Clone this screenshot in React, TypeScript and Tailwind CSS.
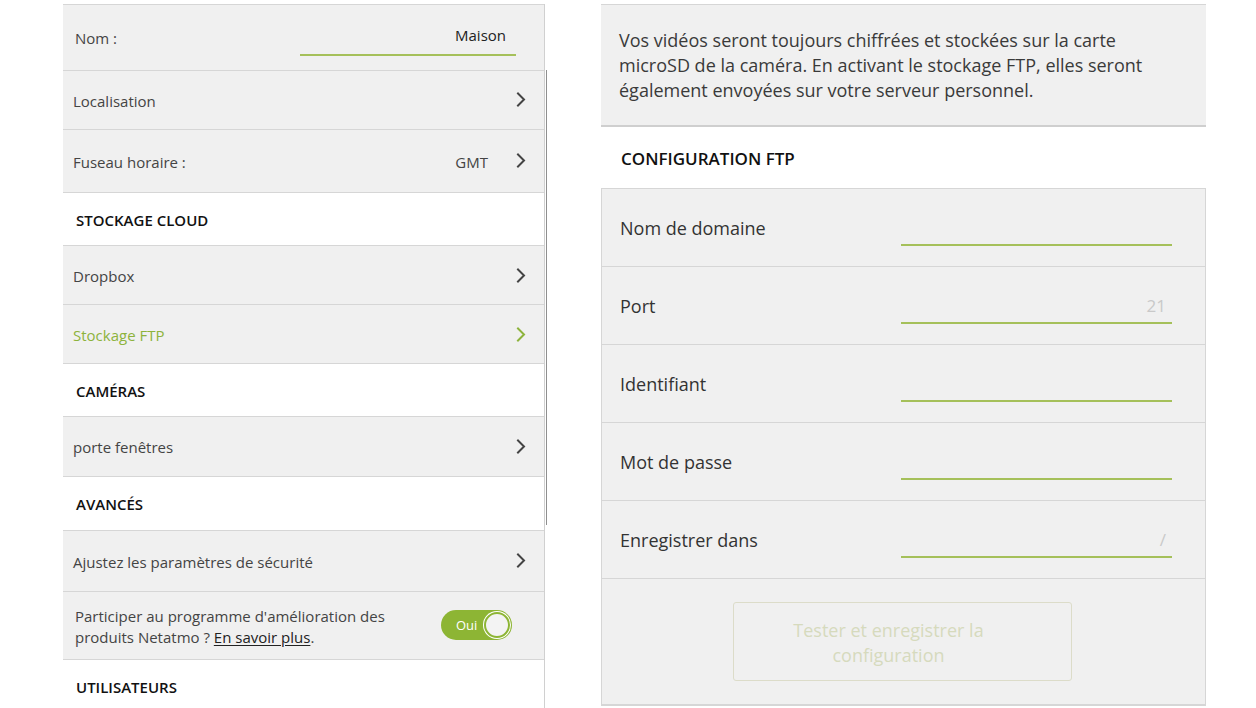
import React from "react";

const Chevron = ({ color = "#444" }: { color?: string }) => (
  <svg width="10" height="15" viewBox="0 0 10 15" fill="none">
    <path d="M2 1.5 L8 7.5 L2 13.5" stroke={color} strokeWidth="2" strokeLinecap="square" strokeLinejoin="miter" />
  </svg>
);

const Row = ({
  label,
  h,
  green,
  right,
}: {
  label: string;
  h: string;
  green?: boolean;
  right?: string;
}) => (
  <div className={`flex items-center justify-between border-b border-[#d6d6d6] bg-[#f0f0f0] pl-[10px] pr-[18px] ${h}`}>
    <span className={`pt-[2px] text-[15px] ${green ? "text-[#8db33c]" : "text-[#444]"}`}>{label}</span>
    <div className="flex items-center gap-[28px]">
      {right && <span className="pt-[2px] text-[15px] text-[#444]">{right}</span>}
      <Chevron color={green ? "#8db33c" : "#444"} />
    </div>
  </div>
);

const Header = ({ label, h }: { label: string; h: string }) => (
  <div className={`flex items-center border-b border-[#d6d6d6] bg-white pl-[13px] ${h}`}>
    <span className="pt-[2px] text-[15px] font-semibold text-[#111]">{label}</span>
  </div>
);

const Field = ({ label, placeholder }: { label: string; placeholder?: string }) => (
  <div className="flex h-[78px] justify-between border-b border-[#d6d6d6] bg-[#f0f0f0] pl-[18px] pr-[33px]">
    <span className="self-center pt-[2px] text-[18px] text-[#333]">{label}</span>
    <div className="mb-[20px] flex h-[34px] w-[271px] items-center justify-end self-end border-b-2 border-[#a5c05a] pr-[6px]">
      {placeholder && <span className="text-[17px] text-[#c9c9c9]">{placeholder}</span>}
    </div>
  </div>
);

export default function App() {
  return (
    <div
      className="flex h-[708px] w-[1256px] overflow-hidden bg-white"
      style={{ fontFamily: '"Open Sans", "Liberation Sans", sans-serif' }}
    >
      {/* Left panel */}
      <div className="ml-[63px] mt-[4px] flex w-[482px] flex-col border-r border-[#d0d0d0]">
        <div className="flex h-[67px] items-center justify-between border-y border-[#d6d6d6] bg-[#f0f0f0] pl-[12px] pr-[28px]">
          <span className="pt-[2px] text-[15px] text-[#444]">Nom :</span>
          <div className="flex h-[38px] w-[216px] items-center justify-end border-b-2 border-[#a5c05a] pr-[10px] pb-[2px]">
            <span className="text-[15px] text-[#222]">Maison</span>
          </div>
        </div>
        <Row label="Localisation" h="h-[60px]" />
        <Row label="Fuseau horaire :" h="h-[63px]" right="GMT" />
        <Header label="STOCKAGE CLOUD" h="h-[54px]" />
        <Row label="Dropbox" h="h-[59px]" />
        <Row label="Stockage FTP" h="h-[60px]" green />
        <Header label="CAMÉRAS" h="h-[53px]" />
        <Row label="porte fenêtres" h="h-[60px]" />
        <Header label="AVANCÉS" h="h-[55px]" />
        <Row label="Ajustez les paramètres de sécurité" h="h-[61px]" />
        <div className="flex h-[69px] items-center justify-between border-b border-[#d6d6d6] bg-[#f0f0f0] pl-[12px] pr-[32px]">
          <p className="pt-[3px] text-[15px] leading-[21px] text-[#444]">
            Participer au programme d'amélioration des
            <br />
            produits Netatmo ? <span className="text-[#222] underline underline-offset-2">En savoir plus</span>.
          </p>
          <div className="flex h-[30px] w-[71px] items-center justify-between rounded-full bg-[#8db534] pl-[15px] pr-[2px]">
            <span className="text-[13px] text-white">Oui</span>
            <div className="h-[26px] w-[26px] rounded-full border-2 border-[#8db534] bg-[#f3f3f3] ring-1 ring-white" />
          </div>
        </div>
        <div className="flex h-[48px] items-start bg-white pl-[13px] pt-[16px]">
          <span className="text-[15px] font-semibold text-[#111]">UTILISATEURS</span>
        </div>
      </div>
      <div className="ml-px mt-[70px] h-[455px] w-px bg-[#8f8f8f]" />

      {/* Right panel */}
      <div className="ml-[54px] mt-[4px] flex w-[605px] flex-col">
        <div className="h-[123px] border-y border-[#d6d6d6] border-b-2 border-b-[#cfcfcf] bg-[#f0f0f0] pl-[18px] pt-[23px]">
          <p className="text-[18px] leading-[25px] text-[#3a3a3a]">
            Vos vidéos seront toujours chiffrées et stockées sur la carte
            <br />
            microSD de la caméra. En activant le stockage FTP, elles seront
            <br />
            également envoyées sur votre serveur personnel.
          </p>
        </div>
        <div className="flex h-[62px] items-center border-b border-[#d6d6d6] bg-white pl-[20px]">
          <span className="pt-[2px] text-[17px] font-semibold text-[#111]">CONFIGURATION FTP</span>
        </div>
        <div className="flex flex-col border-x border-[#d6d6d6]">
          <Field label="Nom de domaine" />
          <Field label="Port" placeholder="21" />
          <Field label="Identifiant" />
          <Field label="Mot de passe" />
          <Field label="Enregistrer dans" placeholder="/" />
          <div className="flex h-[127px] justify-center border-b-2 border-[#d6d6d6] bg-[#f0f0f0] pt-[23px] pr-[2px]">
            <div className="flex h-[79px] w-[339px] items-center justify-center rounded-[3px] border border-[#dcdcc9] pr-[28px] text-center">
              <span className="pt-[2px] text-[18px] leading-[25px] text-[#d6dabd]">
                Tester et enregistrer la
                <br />
                configuration
              </span>
            </div>
          </div>
        </div>
      </div>
    </div>
  );
}
